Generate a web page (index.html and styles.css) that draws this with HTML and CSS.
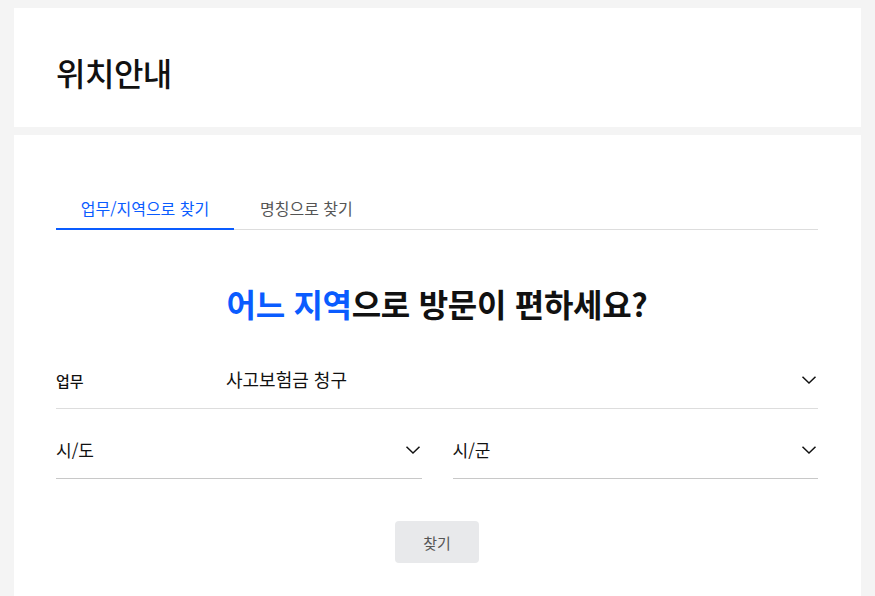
FILE: index.html
```
<!DOCTYPE html>
<html lang="ko">

<head>
	<meta charset="UTF-8">
	<meta name="viewport" content="width=device-width, initial-scale=1.0">
	<title>위치안내</title>
	<link rel="stylesheet" href="styles.css">
</head>

<body>
	<div class="page">
		<div class="card header">
			<h1 class="title">위치안내</h1>
		</div>

		<div class="card search">
			<div class="tabs">
				<div class="tab active">업무/지역으로 찾기</div>
				<div class="tab">명칭으로 찾기</div>
			</div>

			<h2 class="question"><span class="blue">어느 지역</span>으로 방문이 편하세요?</h2>

			<div class="row">
				<span class="label">업무</span>
				<span class="value">사고보험금 청구</span>
				<svg class="chevron" width="16" height="10" viewBox="0 0 16 10"><path d="M1.5 1.8 L8 8 L14.5 1.8" fill="none" stroke="#111" stroke-width="1.5"/></svg>
			</div>

			<div class="row-pair">
				<div class="row select">
					<span class="value big">시/도</span>
					<svg class="chevron" width="16" height="10" viewBox="0 0 16 10"><path d="M1.5 1.8 L8 8 L14.5 1.8" fill="none" stroke="#111" stroke-width="1.5"/></svg>
				</div>
				<div class="row select">
					<span class="value big">시/군</span>
					<svg class="chevron" width="16" height="10" viewBox="0 0 16 10"><path d="M1.5 1.8 L8 8 L14.5 1.8" fill="none" stroke="#111" stroke-width="1.5"/></svg>
				</div>
			</div>

			<div class="actions">
				<button class="button">찾기</button>
			</div>
		</div>
	</div>
</body>

</html>
```

FILE: styles.css
```
html,
body {
	margin: 0;
	background: #f4f4f4;
	font-family: "Noto Sans CJK KR", "Noto Sans", sans-serif;
	color: #111;
}

.page {
	padding: 8px 14px 0 14px;
	display: flex;
	flex-direction: column;
	gap: 8px;
}

.card {
	background: white;
	padding: 0 43px 0 42px;
}

.header {
	height: 119px;
	display: flex;
	align-items: center;
}

.title {
	margin: 0;
	font-size: 32px;
	font-weight: 500;
	letter-spacing: -0.5px;
	/* texto um pouco abaixo do centro */
	padding-top: 9px;
}

.search {
	padding-top: 50px;
	padding-bottom: 40px;
}

.tabs {
	display: flex;
	border-bottom: 1px solid #ddd;
}

.tab {
	width: 178px;
	text-align: center;
	font-size: 16px;
	line-height: 21px;
	padding: 13px 0 10px 0;
	color: #555;
	margin-bottom: -1px;
}

.tab + .tab {
	width: auto;
	padding-left: 26px;
}

.tab.active {
	color: #0a5cff;
	border-bottom: 2px solid #0a5cff;
	padding-bottom: 9px;
}

.question {
	margin: 52px 0 28px 0;
	text-align: center;
	font-size: 32px;
	line-height: 42px;
	font-weight: 700;
	letter-spacing: -0.3px;
}

.blue {
	color: #0a5cff;
}

.row {
	display: flex;
	align-items: center;
	height: 56px;
	border-bottom: 1px solid #ddd;
}

.label {
	width: 170px;
	font-size: 15px;
	font-weight: 500;
}

.value {
	flex: 1;
	font-size: 18px;
	padding-bottom: 2px;
}

.value.big {
	font-size: 17px;
}

.chevron {
	margin-right: 1px;
}

.row-pair {
	display: flex;
	gap: 31px;
	margin-top: 13px;
}

.row-pair .row {
	flex: 1;
	border-bottom-color: #c8c8c8;
}

.actions {
	display: flex;
	justify-content: center;
	margin-top: 42px;
}

.button {
	width: 84px;
	height: 42px;
	border: none;
	border-radius: 4px;
	background: #e8e9eb;
	color: #555;
	font-family: inherit;
	font-size: 15px;
}
```
